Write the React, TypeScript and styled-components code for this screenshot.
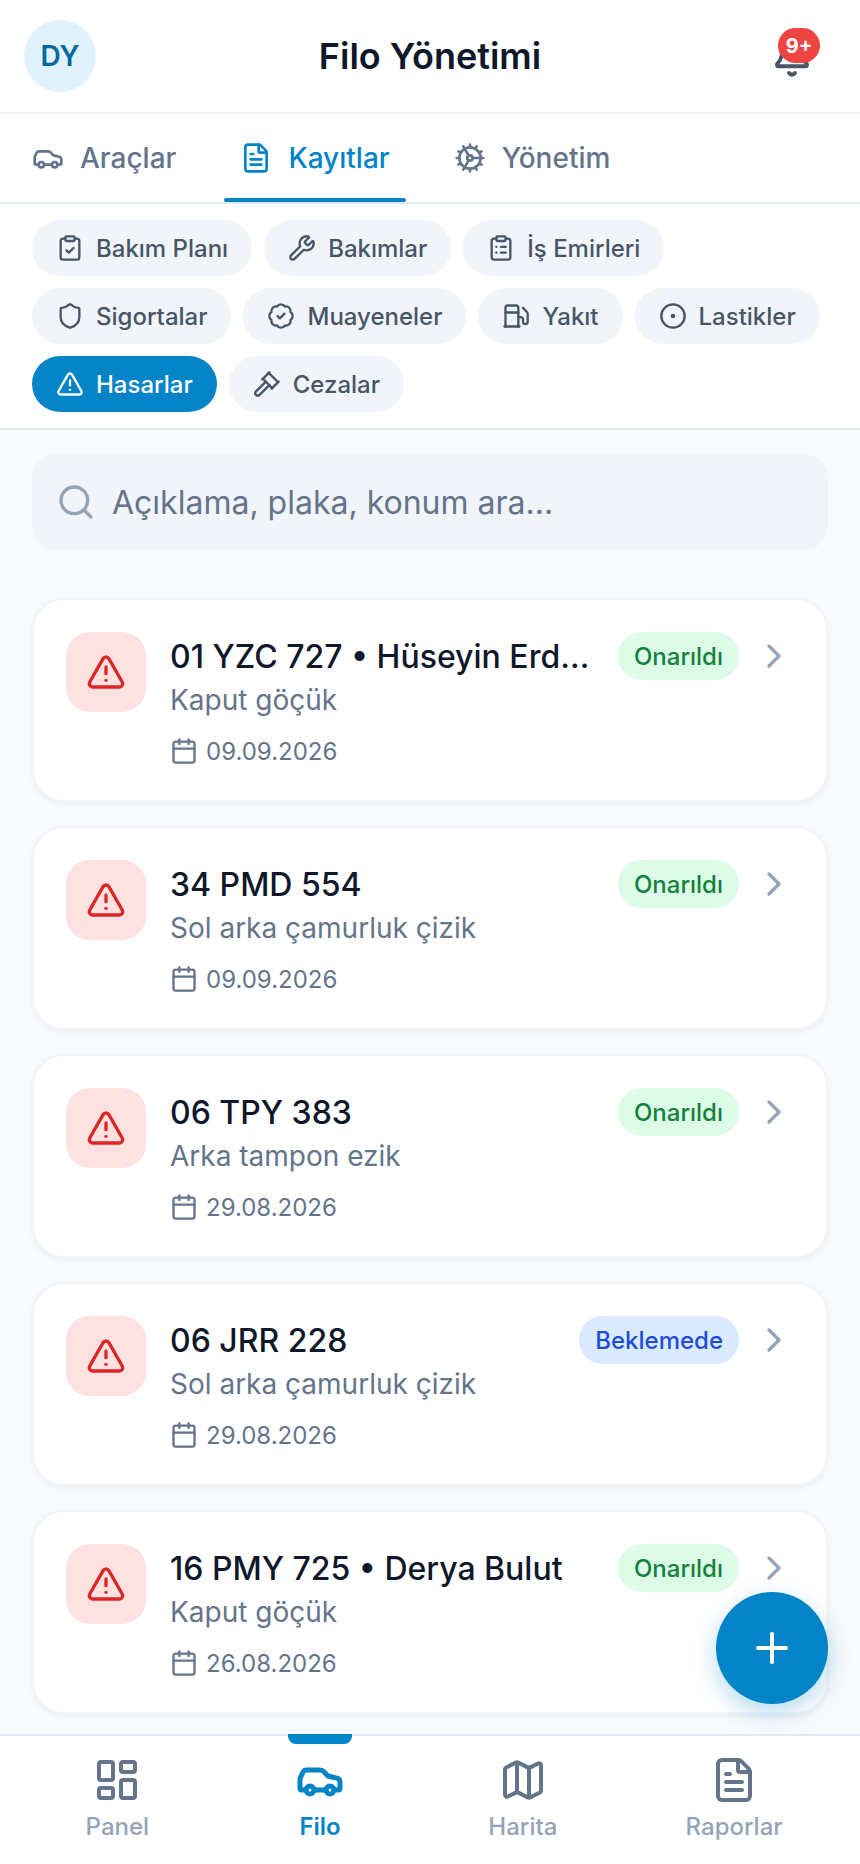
import styled, { createGlobalStyle } from "styled-components"
import {
  AlertTriangle,
  BadgeCheck,
  Bell,
  Calendar,
  Car,
  ChevronRight,
  CircleDot,
  ClipboardCheck,
  ClipboardList,
  Cog,
  FileText,
  Fuel,
  Gavel,
  LayoutDashboard,
  Map as MapIcon,
  Plus,
  Search,
  Shield,
  Wrench,
} from "lucide-react"

const chipRows = [
  [
    { label: "Bakım Planı", icon: ClipboardCheck },
    { label: "Bakımlar", icon: Wrench },
    { label: "İş Emirleri", icon: ClipboardList },
  ],
  [
    { label: "Sigortalar", icon: Shield },
    { label: "Muayeneler", icon: BadgeCheck },
    { label: "Yakıt", icon: Fuel },
    { label: "Lastikler", icon: CircleDot },
  ],
  [
    { label: "Hasarlar", icon: AlertTriangle, active: true },
    { label: "Cezalar", icon: Gavel },
  ],
]

const records = [
  { title: "01 YZC 727 • Hüseyin Erdoğan", text: "Kaput göçük", date: "09.09.2026", status: "Onarıldı" },
  { title: "34 PMD 554", text: "Sol arka çamurluk çizik", date: "09.09.2026", status: "Onarıldı" },
  { title: "06 TPY 383", text: "Arka tampon ezik", date: "29.08.2026", status: "Onarıldı" },
  { title: "06 JRR 228", text: "Sol arka çamurluk çizik", date: "29.08.2026", status: "Beklemede" },
  { title: "16 PMY 725 • Derya Bulut", text: "Kaput göçük", date: "26.08.2026", status: "Onarıldı" },
]

const navItems = [
  { label: "Panel", icon: LayoutDashboard },
  { label: "Filo", icon: Car, active: true },
  { label: "Harita", icon: MapIcon },
  { label: "Raporlar", icon: FileText },
]

const App = () => {
  return (
    <Screen>
      <GlobalStyle />
      <Header>
        <Avatar>DY</Avatar>
        <Title>Filo Yönetimi</Title>
        <BellButton>
          <Bell size={40} strokeWidth={2.4} />
          <BellBadge>9+</BellBadge>
        </BellButton>
      </Header>

      <Tabs>
        <Tab>
          <Car size={32} />
          Araçlar
        </Tab>
        <Tab $active>
          <FileText size={32} />
          Kayıtlar
        </Tab>
        <Tab>
          <Cog size={32} />
          Yönetim
        </Tab>
      </Tabs>

      <ChipPanel>
        {chipRows.map((row, i) => (
          <ChipRow key={i}>
            {row.map((chip) => (
              <Chip key={chip.label} $active={chip.active}>
                <chip.icon size={28} />
                {chip.label}
              </Chip>
            ))}
          </ChipRow>
        ))}
      </ChipPanel>

      <Main>
        <SearchBox>
          <Search size={40} color="#94a3b8" />
          Açıklama, plaka, konum ara...
        </SearchBox>
        <List>
          {records.map((r, i) => (
            <Card key={i}>
              <IconBox>
                <AlertTriangle size={40} />
              </IconBox>
              <CardBody>
                <CardTop>
                  <CardTitle>{r.title}</CardTitle>
                  <Status $pending={r.status === "Beklemede"}>{r.status}</Status>
                  <Arrow>
                    <ChevronRight size={40} />
                  </Arrow>
                </CardTop>
                <CardText>{r.text}</CardText>
                <CardDate>
                  <Calendar size={28} />
                  {r.date}
                </CardDate>
              </CardBody>
            </Card>
          ))}
        </List>
      </Main>

      <Fab>
        <Plus size={48} />
      </Fab>

      <BottomNav>
        {navItems.map((item) => (
          <NavItem key={item.label} $active={item.active}>
            {item.active && <NavMarker />}
            <item.icon size={48} strokeWidth={item.active ? 2.5 : 2} />
            <span>{item.label}</span>
          </NavItem>
        ))}
      </BottomNav>
    </Screen>
  )
}

export default App

const GlobalStyle = createGlobalStyle`
  html, body {
    margin: 0;
    padding: 0;
    background: #fff;
    font-family: Inter, "Liberation Sans", sans-serif;
  }
  * {
    box-sizing: border-box;
  }
`

const Screen = styled.div`
  position: relative;
  display: flex;
  flex-direction: column;
  width: 860px;
  height: 1864px;
  overflow: hidden;
  background: #f8fafc;
`

const Header = styled.header`
  display: grid;
  grid-template-columns: 1fr auto 1fr;
  align-items: center;
  height: 114px;
  flex-shrink: 0;
  padding: 0 24px;
  background: #fff;
  border-bottom: 2px solid #f1f5f9;
`

const Avatar = styled.div`
  display: flex;
  align-items: center;
  justify-content: center;
  width: 72px;
  height: 72px;
  border-radius: 50%;
  background: #e0f2fe;
  color: #0369a1;
  font-size: 28px;
  font-weight: 600;
`

const Title = styled.h1`
  margin: 0;
  color: #0f172a;
  font-size: 36px;
  font-weight: 600;
`

const BellButton = styled.div`
  position: relative;
  justify-self: end;
  display: flex;
  align-items: center;
  justify-content: center;
  width: 64px;
  height: 64px;
  margin: 4px 12px 0 0;
  color: #475569;
`

const BellBadge = styled.span`
  position: absolute;
  top: 2px;
  right: 4px;
  display: flex;
  align-items: center;
  justify-content: center;
  width: 42px;
  height: 35px;
  border-radius: 18px;
  background: #ef4444;
  color: #fff;
  font-size: 20px;
  font-weight: 700;
`

const Tabs = styled.nav`
  display: flex;
  gap: 32px;
  flex-shrink: 0;
  height: 90px;
  padding: 0 16px;
  background: #fff;
  border-bottom: 2px solid #e2e8f0;
`

const Tab = styled.div<{ $active?: boolean }>`
  position: relative;
  display: flex;
  align-items: center;
  gap: 16px;
  padding: 0 16px;
  color: ${(p) => (p.$active ? "#0284c7" : "#64748b")};
  font-size: 28px;
  font-weight: 500;

  &::after {
    content: "";
    display: ${(p) => (p.$active ? "block" : "none")};
    position: absolute;
    left: 0;
    right: 0;
    bottom: 0;
    height: 4px;
    border-radius: 2px;
    background: #0284c7;
  }
`

const ChipPanel = styled.div`
  display: flex;
  flex-direction: column;
  gap: 12px;
  flex-shrink: 0;
  padding: 16px 32px;
  background: #fff;
  border-bottom: 2px solid #e2e8f0;
`

const ChipRow = styled.div`
  display: flex;
  gap: 12px;
`

const Chip = styled.div<{ $active?: boolean }>`
  display: flex;
  align-items: center;
  gap: 12px;
  height: 56px;
  padding: 0 24px;
  border-radius: 28px;
  background: ${(p) => (p.$active ? "#0284c7" : "#f1f5f9")};
  color: ${(p) => (p.$active ? "#fff" : "#475569")};
  font-size: 24px;
  font-weight: 500;
`

const Main = styled.main`
  flex: 1;
  min-height: 0;
  overflow: hidden;
  padding: 24px 32px 0;
`

const SearchBox = styled.div`
  display: flex;
  align-items: center;
  gap: 16px;
  height: 96px;
  padding: 0 24px;
  border-radius: 24px;
  background: #f1f5f9;
  color: #64748b;
  font-size: 32px;
`

const List = styled.div`
  display: flex;
  flex-direction: column;
  gap: 24px;
  margin-top: 48px;
`

const Card = styled.article`
  display: flex;
  gap: 24px;
  height: 204px;
  padding: 32px;
  border: 2px solid #f1f5f9;
  border-radius: 32px;
  background: #fff;
  box-shadow: 0 2px 6px rgba(15, 23, 42, 0.05);
`

const IconBox = styled.div`
  display: flex;
  align-items: center;
  justify-content: center;
  flex-shrink: 0;
  width: 80px;
  height: 80px;
  border-radius: 24px;
  background: #fee2e2;
  color: #dc2626;
`

const CardBody = styled.div`
  flex: 1;
  min-width: 0;
`

const CardTop = styled.div`
  display: flex;
  align-items: center;
  height: 48px;
`

const CardTitle = styled.div`
  flex: 1;
  min-width: 0;
  overflow: hidden;
  color: #0f172a;
  font-size: 32px;
  font-weight: 500;
  white-space: nowrap;
  text-overflow: ellipsis;
`

const Status = styled.span<{ $pending?: boolean }>`
  display: flex;
  align-items: center;
  flex-shrink: 0;
  height: 48px;
  margin-left: 24px;
  padding: 0 16px;
  border-radius: 24px;
  background: ${(p) => (p.$pending ? "#dbeafe" : "#dcfce7")};
  color: ${(p) => (p.$pending ? "#1d4ed8" : "#15803d")};
  font-size: 24px;
  font-weight: 500;
`

const Arrow = styled.span`
  display: flex;
  flex-shrink: 0;
  margin-left: 15px;
  color: #94a3b8;
`

const CardText = styled.div`
  color: #64748b;
  font-size: 28px;
  line-height: 40px;
`

const CardDate = styled.div`
  display: flex;
  align-items: center;
  gap: 8px;
  height: 32px;
  margin-top: 15px;
  color: #64748b;
  font-size: 24px;
`

const Fab = styled.div`
  position: absolute;
  right: 32px;
  bottom: 160px;
  display: flex;
  align-items: center;
  justify-content: center;
  width: 112px;
  height: 112px;
  border-radius: 50%;
  background: #0284c7;
  color: #fff;
  box-shadow: 0 8px 24px rgba(2, 132, 199, 0.3);
`

const BottomNav = styled.nav`
  display: flex;
  justify-content: space-around;
  flex-shrink: 0;
  height: 130px;
  padding: 0 16px;
  background: #fff;
  border-top: 2px solid #e2e8f0;
`

const NavItem = styled.div<{ $active?: boolean }>`
  position: relative;
  display: flex;
  flex-direction: column;
  align-items: center;
  min-width: 128px;
  padding: 20px 24px 0;
  color: ${(p) => (p.$active ? "#0284c7" : "#64748b")};

  span {
    margin-top: 8px;
    color: ${(p) => (p.$active ? "#0284c7" : "#94a3b8")};
    font-size: 24px;
    font-weight: ${(p) => (p.$active ? 600 : 500)};
  }
`

const NavMarker = styled.div`
  position: absolute;
  top: -2px;
  left: 50%;
  width: 64px;
  height: 10px;
  margin-left: -32px;
  border-radius: 0 0 8px 8px;
  background: #0284c7;
`
